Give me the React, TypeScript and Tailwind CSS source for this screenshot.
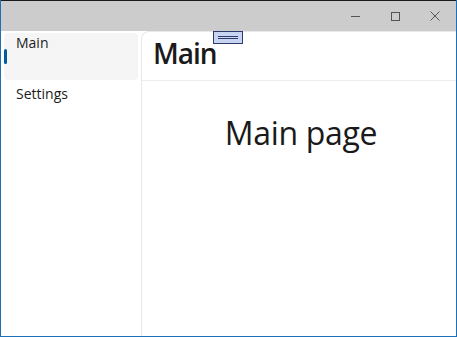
import React from 'react';

function TitleBar() {
    return (
        <div className="h-[31px] shrink-0 bg-[#cccccc] border-t border-[#1a1a1a] flex justify-end items-center">
            {/* minimize */}
            <div className="w-[40px] h-full flex items-center justify-center">
                <div className="w-[9px] h-px bg-[#555]" />
            </div>
            {/* maximize */}
            <div className="w-[40px] h-full flex items-center justify-center">
                <div className="w-[9px] h-[9px] border border-[#555]" />
            </div>
            {/* close */}
            <div className="w-[40px] h-full flex items-center justify-center mr-[1px]">
                <svg width="10" height="10" viewBox="0 0 10 10">
                    <path d="M0.5 0.5 L9.5 9.5 M9.5 0.5 L0.5 9.5" stroke="#555" strokeWidth="1" />
                </svg>
            </div>
        </div>
    );
}

function NavItem({ label, selected }: { label: string; selected?: boolean }) {
    return (
        <div
            className={`relative ml-[3px] w-[134px] rounded-[4px] pl-[12px] text-[14px] leading-[20px] text-[#1a1a1a] ${
                selected ? 'bg-[#f5f5f5] h-[47px]' : 'h-[40px]'
            }`}
        >
            {selected && <div className="absolute left-0 top-[16px] w-[3px] h-[15px] rounded-full bg-[#005a9e]" />}
            {label}
        </div>
    );
}

export default function App() {
    return (
        <div
            className="w-[457px] h-[337px] flex flex-col bg-white border-x border-b border-[#1c6fb9]"
            style={{ fontFamily: '"Open Sans", "Noto Sans", sans-serif' }}
        >
            <TitleBar />
            <div className="flex flex-1 min-h-0 relative">
                <div className="w-[140px] shrink-0 pt-[2px] flex flex-col gap-[4px]">
                    <NavItem label="Main" selected />
                    <NavItem label="Settings" />
                </div>
                <div className="flex-1 flex flex-col border-l border-t border-[#e8e8e8] rounded-tl-[8px]">
                    <div className="h-[49px] shrink-0 border-b border-[#ededed] pl-[11px] pt-[1px]">
                        <h1 className="text-[28px] leading-[40px] font-semibold tracking-[-1px] text-[#1a1a1a]">Main</h1>
                    </div>
                    <div className="flex justify-center pt-[30px] pl-[4px]">
                        <p className="text-[32px] leading-[44px] tracking-[-0.3px] text-[#1a1a1a]">Main page</p>
                    </div>
                </div>
                {/* drag handle overlay */}
                <div className="absolute left-[212px] top-0 w-[30px] h-[13px] bg-[#c9d4f2] border border-[#2e3b6e] flex flex-col items-center justify-center gap-[1px]">
                    <div className="w-[20px] h-px bg-[#2e3b6e]" />
                    <div className="w-[20px] h-px bg-[#2e3b6e]" />
                </div>
            </div>
        </div>
    );
}
